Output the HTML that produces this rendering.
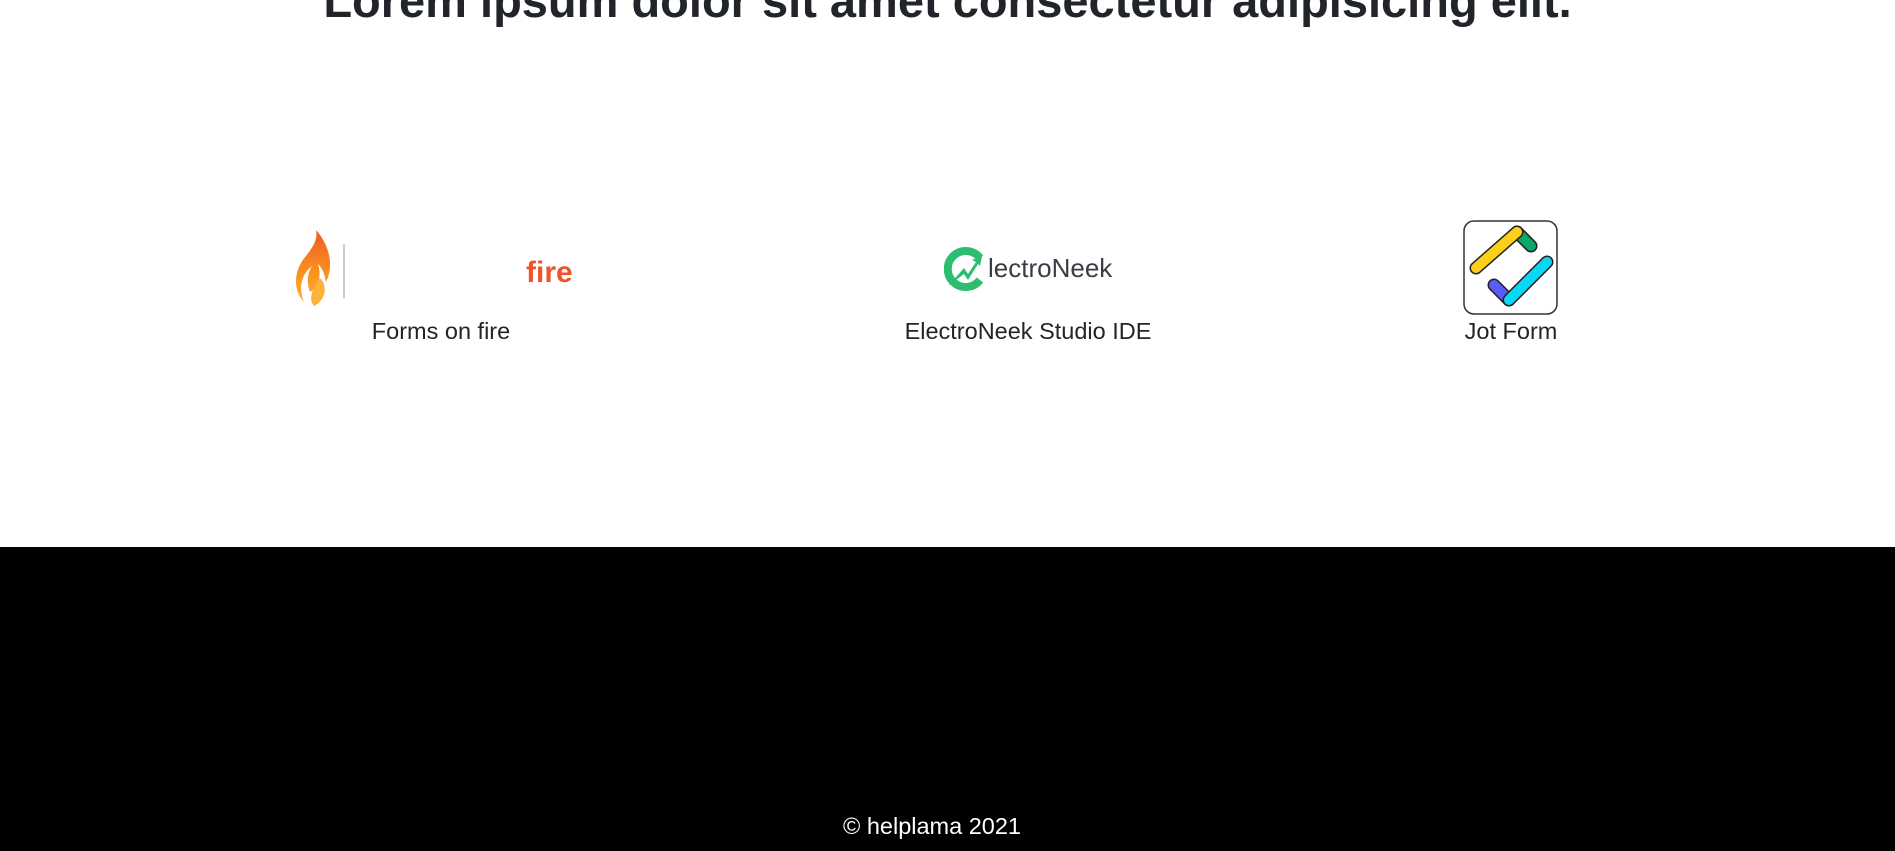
<!DOCTYPE html>
<html><head><meta charset="utf-8"><style>
*{margin:0;padding:0;box-sizing:border-box}
body{width:1895px;height:851px;overflow:hidden;background:#fff;font-family:"Liberation Sans",sans-serif;color:#222;position:relative}
h1{position:absolute;left:0;width:1895px;text-align:center;top:-27px;font-size:47px;font-weight:bold;color:#212529;white-space:nowrap}
.lbl{position:absolute;font-size:23.5px;transform:translateX(-50%);white-space:nowrap;top:318px;color:#212529}
footer{position:absolute;left:0;top:547px;width:1895px;height:304px;background:#000}
.copy{position:absolute;top:813px;left:932px;transform:translateX(-50%);white-space:nowrap;color:#fff;font-size:23.5px}
</style></head><body>
<h1>Lorem ipsum dolor sit amet consectetur adipisicing elit.</h1>

<svg style="position:absolute;left:294px;top:226px" width="300" height="84" viewBox="0 0 300 84">
<defs><linearGradient id="fl" x1="0" y1="0" x2="0" y2="1"><stop offset="0" stop-color="#f15a24"/><stop offset=".6" stop-color="#f7931e"/><stop offset="1" stop-color="#fbb03b"/></linearGradient></defs>
<path d="M22 4 C36 20 40 40 32 56 C30 44 26 40 24 38 C28 50 24 62 16 66 C12 56 14 46 18 40 C8 48 4 60 10 76 C0 66 -2 46 12 30 C20 20 24 12 22 4Z" fill="url(#fl)"/>
<path d="M26 52 C34 60 32 74 20 80 C14 74 18 62 26 52Z" fill="#fcb23b"/>
<line x1="50" y1="18" x2="50" y2="72" stroke="#ccc" stroke-width="2"/>
<text x="232" y="56" font-family="Liberation Sans" font-size="30" font-weight="bold" fill="#f0522a">fire</text>
</svg>
<div class="lbl" style="left:441px">Forms on fire</div>

<svg style="position:absolute;left:944px;top:246px" width="175" height="46" viewBox="0 0 175 46">
<path d="M36 12 A18 18 0 1 0 36 34" fill="none" stroke="#2dbd6e" stroke-width="8"/>
<path d="M4 40 L20 22 L24 28 L32 16 L28 14 L38 10 L36 20 L34 18 L24 34 L20 28 Z" fill="#2dbd6e"/>
<text x="44" y="31" font-family="Liberation Sans" font-size="26" fill="#3a3d46">lectroNeek</text>
</svg>
<div class="lbl" style="left:1028px">ElectroNeek Studio IDE</div>

<svg style="position:absolute;left:1463px;top:220px" width="96" height="96" viewBox="0 0 96 96">
<rect x="1" y="1" width="93" height="93" rx="10" fill="#fff" stroke="#333" stroke-width="1.5"/>
<g stroke-linecap="round">
<line x1="54" y1="12" x2="68" y2="26" stroke="#222" stroke-width="13"/>
<line x1="54" y1="12" x2="68" y2="26" stroke="#0aa86a" stroke-width="10"/>
<line x1="54" y1="12" x2="13" y2="48" stroke="#222" stroke-width="13"/>
<line x1="54" y1="12" x2="13" y2="48" stroke="#fcd01a" stroke-width="10"/>
<line x1="31" y1="65" x2="46" y2="80" stroke="#222" stroke-width="13"/>
<line x1="31" y1="65" x2="46" y2="80" stroke="#5b5bfa" stroke-width="10"/>
<line x1="46" y1="80" x2="84" y2="42" stroke="#222" stroke-width="13"/>
<line x1="46" y1="80" x2="84" y2="42" stroke="#0ad8f5" stroke-width="10"/>
</g>
</svg>
<div class="lbl" style="left:1511px">Jot Form</div>

<footer></footer>
<div class="copy">© helplama 2021</div>
</body></html>
